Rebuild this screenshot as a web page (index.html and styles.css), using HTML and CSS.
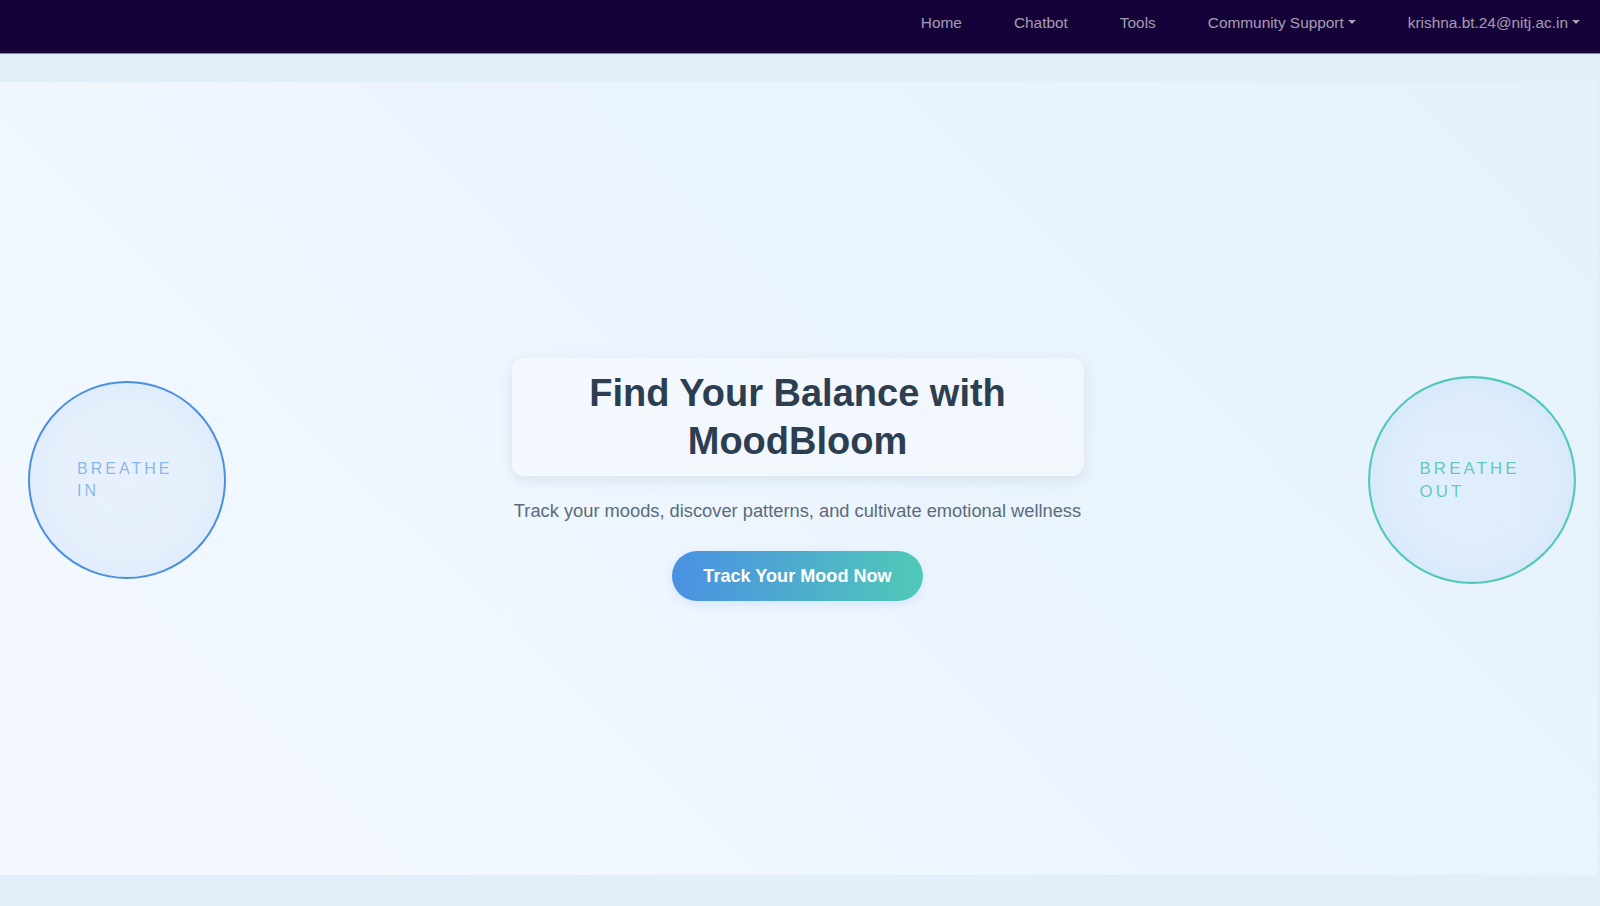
FILE: index.html
```html
<!DOCTYPE html>
<html lang="en">
<head>
<meta charset="utf-8">
<title>MoodBloom</title>
<link rel="stylesheet" href="styles.css">
</head>
<body>
<nav class="navbar">
  <ul class="nav-list">
    <li><a class="nav-link" href="#">Home</a></li>
    <li><a class="nav-link" href="#">Chatbot</a></li>
    <li><a class="nav-link" href="#">Tools</a></li>
    <li><a class="nav-link dropdown" href="#">Community Support</a></li>
    <li><a class="nav-link dropdown" href="#">krishna.bt.24@nitj.ac.in</a></li>
  </ul>
</nav>
<main class="hero">
  <div class="breath-circle breath-in">
    <span class="breath-text">BREATHE IN</span>
  </div>
  <section class="hero-content">
    <div class="title-card">
      <h1 class="hero-title">Find Your Balance with MoodBloom</h1>
    </div>
    <p class="hero-subtitle">Track your moods, discover patterns, and cultivate emotional wellness</p>
    <a class="cta-button" href="#">Track Your Mood Now</a>
  </section>
  <div class="breath-circle breath-out">
    <span class="breath-text">BREATHE OUT</span>
  </div>
</main>
</body>
</html>
```
FILE: styles.css
```css
* { box-sizing: border-box; }
html, body { margin: 0; padding: 0; }
body {
  background: #e1effb;
  font-family: "Liberation Sans", Arial, Helvetica, sans-serif;
  height: 906px;
  overflow: hidden;
}
.navbar {
  height: 54px;
  background: #150239;
  border-bottom: 1px solid #8c84b4;
  display: flex;
  justify-content: flex-end;
  align-items: flex-start;
  padding: 11px 20px 0 20px;
}
.nav-list {
  list-style: none;
  margin: 0;
  padding: 0;
  display: flex;
  gap: 52px;
}
.nav-link {
  display: block;
  color: rgba(255, 255, 255, 0.62);
  text-decoration: none;
  font-size: 15.4px;
  line-height: 24px;
}
.dropdown::after {
  content: "";
  display: inline-block;
  margin-left: 4px;
  vertical-align: 4px;
  border-top: 4.5px solid rgba(255, 255, 255, 0.62);
  border-left: 4.5px solid transparent;
  border-right: 4.5px solid transparent;
}
.hero {
  margin: 28px 3px 0 0;
  height: 793px;
  background: linear-gradient(45deg, #f5f9ff 0%, #ecf5fe 50%, #e4f1fc 100%);
  display: flex;
  align-items: center;
  justify-content: space-between;
  padding: 2px 26px 0 28px;
}
.breath-circle {
  width: 198px;
  height: 198px;
  flex: 0 0 198px;
  border-radius: 50%;
  border: 2px solid #4a90e2;
  background:
    radial-gradient(circle, rgba(255,255,255,0.25) 0%, rgba(255,255,255,0.18) 55%, rgba(255,255,255,0) 72%),
    rgba(74, 144, 226, 0.1);
  display: flex;
  align-items: center;
  justify-content: center;
}
.breath-out {
  border-color: #50c9b8;
  transform: scale(1.05);
}
.breath-text {
  width: 100px;
  font-size: 16px;
  line-height: 22px;
  letter-spacing: 3px;
  color: rgba(74, 144, 226, 0.62);
}
.breath-out .breath-text {
  color: rgba(70, 196, 176, 0.85);
}
.hero-content {
  display: flex;
  flex-direction: column;
  align-items: center;
  margin-right: 4px;
}
.title-card {
  width: 572px;
  padding: 11px 20px;
  border-radius: 12px;
  background: rgba(255, 255, 255, 0.32);
  box-shadow: 0 4px 14px rgba(44, 62, 80, 0.1);
  margin-bottom: 21px;
}
.hero-title {
  margin: 0;
  text-align: center;
  font-size: 38px;
  line-height: 48px;
  font-weight: 700;
  color: #2c3e50;
}
.hero-subtitle {
  margin: 0 0 27px 0;
  font-size: 18.3px;
  line-height: 27px;
  color: #5b6b7b;
}
.cta-button {
  display: inline-block;
  padding: 14px 31px;
  border-radius: 30px;
  background: linear-gradient(90deg, #4a90e2, #50c9b8);
  color: #ffffff;
  font-weight: 700;
  font-size: 18.1px;
  line-height: 22px;
  text-decoration: none;
  box-shadow: 0 3px 10px rgba(74, 144, 226, 0.15);
}
```
